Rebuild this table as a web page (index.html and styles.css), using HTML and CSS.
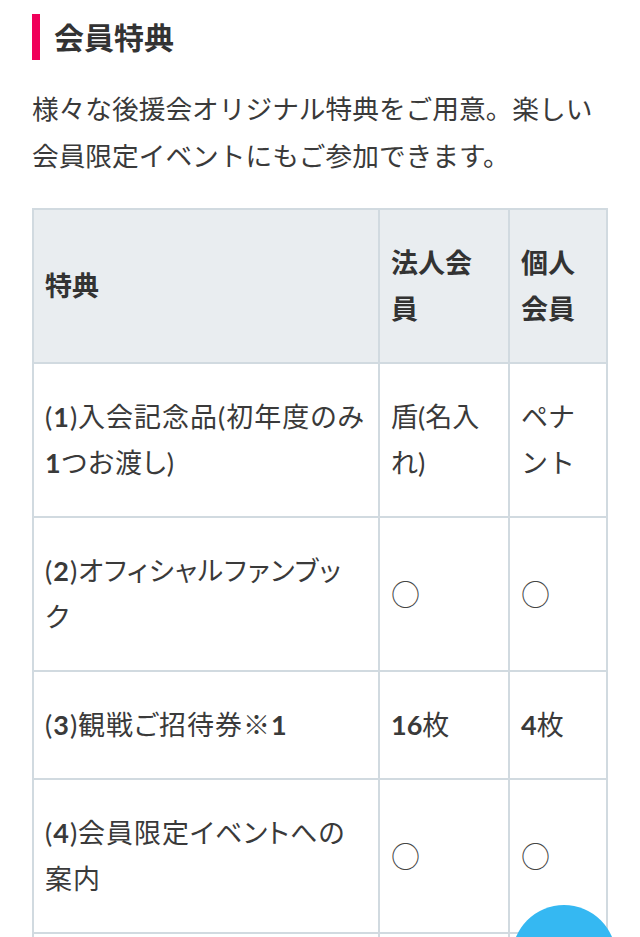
FILE: index.html
```html
<!DOCTYPE html>
<html lang="ja">
<head>
<meta charset="utf-8">
<title>会員特典</title>
<link rel="stylesheet" href="styles.css">
</head>
<body>
<main class="page">
  <h2 class="section-title">会員特典</h2>
  <p class="lead">様々な後援会オリジナル特典をご用意。楽しい会員限定イベントにもご参加できます。</p>
  <table class="benefits">
    <colgroup>
      <col class="col-item">
      <col class="col-corp">
      <col class="col-person">
    </colgroup>
    <thead>
      <tr>
        <th>特典</th>
        <th>法人会員</th>
        <th>個人会員</th>
      </tr>
    </thead>
    <tbody>
      <tr>
        <td>(<span class="num">1</span>)入会記念品(初年度のみ<span class="num">1</span>つお渡し)</td>
        <td>盾(名入れ)</td>
        <td>ペナント</td>
      </tr>
      <tr>
        <td>(<span class="num">2</span>)オフィシャルファンブック</td>
        <td><span class="mark">○</span></td>
        <td><span class="mark">○</span></td>
      </tr>
      <tr>
        <td>(<span class="num">3</span>)観戦ご招待券※<span class="num">1</span></td>
        <td><span class="num">16</span>枚</td>
        <td><span class="num">4</span>枚</td>
      </tr>
      <tr>
        <td>(<span class="num">4</span>)会員限定イベントへの案内</td>
        <td><span class="mark">○</span></td>
        <td><span class="mark">○</span></td>
      </tr>
      <tr>
        <td>(<span class="num">5</span>)会報誌</td>
        <td><span class="mark">○</span></td>
        <td><span class="mark">○</span></td>
      </tr>
    </tbody>
  </table>
</main>
<button class="fab" type="button" aria-label="メニュー"></button>
</body>
</html>
```
FILE: styles.css
```css
html, body {
  margin: 0;
  padding: 0;
  background: #ffffff;
}

body {
  font-family: "Lato", "Noto Sans CJK JP", sans-serif;
  color: #3a3a3a;
  font-size: 27px;
}

.page {
  padding: 14px 32px 40px;
}

.section-title {
  margin: 0;
  font-size: 30px;
  font-weight: 700;
  line-height: 46px;
  border-left: 8px solid #f0005a;
  padding-left: 14px;
  color: #333333;
}

.lead {
  margin: 26px 0 0;
  line-height: 47px;
  font-size: 26.7px;
}

.benefits {
  margin-top: 28px;
  width: 574px;
  table-layout: fixed;
  border-collapse: collapse;
  border: 2px solid #d1dae0;
}

.col-item { width: 346px; }
.col-corp { width: 130px; }
.col-person { width: 98px; }

.benefits th,
.benefits td {
  border: 2px solid #d1dae0;
  padding: 30px 11px;
  line-height: 46px;
  text-align: left;
  vertical-align: middle;
  font-size: 27px;
}

.benefits td:first-child {
  font-feature-settings: "palt";
  letter-spacing: 1px;
  padding-right: 12.5px;
}

.benefits th {
  background: #e9edf0;
  font-weight: 700;
  color: #333333;
}

.num {
  font-weight: 700;
}

.mark {
  font-family: "Noto Sans CJK JP", sans-serif;
  font-size: 29px;
  font-weight: 300;
  color: #444444;
}

.fab {
  position: fixed;
  left: 512px;
  top: 905px;
  width: 104px;
  height: 104px;
  border-radius: 50%;
  border: 0;
  padding: 0;
  background: #35b8f2;
}
```
